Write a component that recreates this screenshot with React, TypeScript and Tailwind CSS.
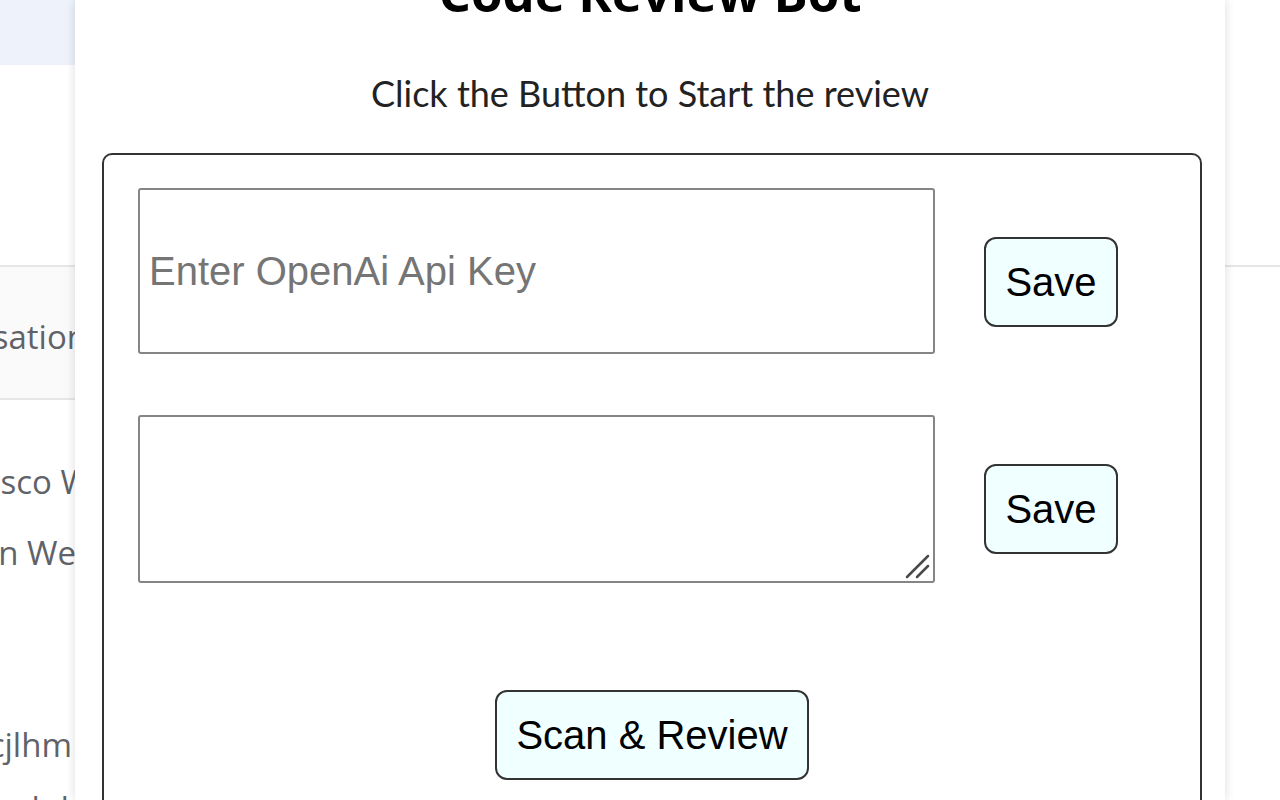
import React from 'react'

const sans = { fontFamily: '"Liberation Sans", Arial, sans-serif' }
const ui = { fontFamily: 'Lato, "Open Sans", sans-serif' }

function SaveButton() {
  return (
    <button
      className="mt-[49px] h-[90px] w-[134px] shrink-0 rounded-[12px] border-2 border-[#333333] bg-[#f0ffff] text-[40px] text-black"
      style={sans}
    >
      Save
    </button>
  )
}

function Clipped({ text, className }: { text: string; className: string }) {
  return (
    <div className={`flex h-[50px] shrink-0 items-center justify-end overflow-hidden ${className}`}>
      <span className="shrink-0 whitespace-nowrap">{text}</span>
    </div>
  )
}

function LeftStrip() {
  return (
    <div
      className="flex h-[800px] w-[75px] shrink-0 flex-col overflow-hidden text-[33px] text-[#5f6368]"
      style={{ fontFamily: '"Open Sans", sans-serif' }}
    >
      <div className="h-[65px] shrink-0 bg-[#eef2fa]" />
      <div className="h-[200px] shrink-0" />
      <div className="flex h-[135px] shrink-0 items-center justify-end overflow-hidden border-y-2 border-[#e6e6e6] bg-[#fafafa] pt-[8px]">
        <span className="mr-[-12px] shrink-0 whitespace-nowrap">Personalisation</span>
      </div>
      <Clipped text="San Francisco W" className="mt-[57px] [&>span]:mr-[-16px]" />
      <Clipped text="Lisbon We" className="mt-[21px] [&>span]:mr-[-1px]" />
      <Clipped text="abcjlhm" className="mt-[142px] [&>span]:mr-[3px]" />
      <Clipped text="bookd" className="mt-[14px] [&>span]:mr-[6px]" />
    </div>
  )
}

function App() {
  return (
    <div className="flex h-[800px] w-[1280px] overflow-hidden bg-white">
      <LeftStrip />

      {/* popup */}
      <div className="relative z-10 w-[1150px] shrink-0 bg-white shadow-[0_0_10px_rgba(0,0,0,0.14)]">
        <h1
          className="mt-[-33px] h-[51px] text-center text-[51px] font-bold leading-[51px] text-black"
          style={{ fontFamily: '"Open Sans", sans-serif' }}
        >
          Code Review Bot
        </h1>
        <p className="mt-[52px] h-[46px] text-center text-[36px] leading-[46px] text-[#222222]" style={ui}>
          Click the Button to Start the review
        </p>

        <div className="ml-[27px] mt-[37px] h-[700px] w-[1100px] rounded-[10px] border-2 border-[#333333] pl-[34px] pt-[33px]">
          <div className="flex items-start gap-[49px]">
            <input
              placeholder="Enter OpenAi Api Key"
              className="h-[166px] w-[797px] rounded-[3px] border-2 border-[#858585] px-[9px] text-[40px] text-black outline-none placeholder:text-[#757575]"
              style={sans}
            />
            <SaveButton />
          </div>
          <div className="mt-[61px] flex items-start gap-[49px]">
            <div className="relative h-[168px] w-[797px] shrink-0">
              <textarea
                className="h-full w-full resize-none rounded-[3px] border-2 border-[#858585] px-[9px] text-[40px] outline-none"
                style={sans}
              />
              <svg className="pointer-events-none absolute bottom-[4px] right-[5px] h-[26px] w-[26px]" viewBox="0 0 26 26">
                <path d="M3 24 L24 3" stroke="#4a4a4a" strokeWidth="2.5" strokeLinecap="round" />
                <path d="M13 24 L24 13" stroke="#4a4a4a" strokeWidth="2.5" strokeLinecap="round" />
              </svg>
            </div>
            <SaveButton />
          </div>
          <div className="mt-[107px] flex justify-center pr-[34px]">
            <button
              className="h-[90px] w-[314px] rounded-[12px] border-2 border-[#333333] bg-[#f0ffff] text-[40px] text-black"
              style={sans}
            >
              Scan &amp; Review
            </button>
          </div>
        </div>
      </div>

      {/* right strip */}
      <div className="flex w-[55px] shrink-0 flex-col">
        <div className="h-[265px] shrink-0" />
        <div className="h-[2px] shrink-0 bg-[#e6e6e6]" />
      </div>
    </div>
  )
}

export default App
